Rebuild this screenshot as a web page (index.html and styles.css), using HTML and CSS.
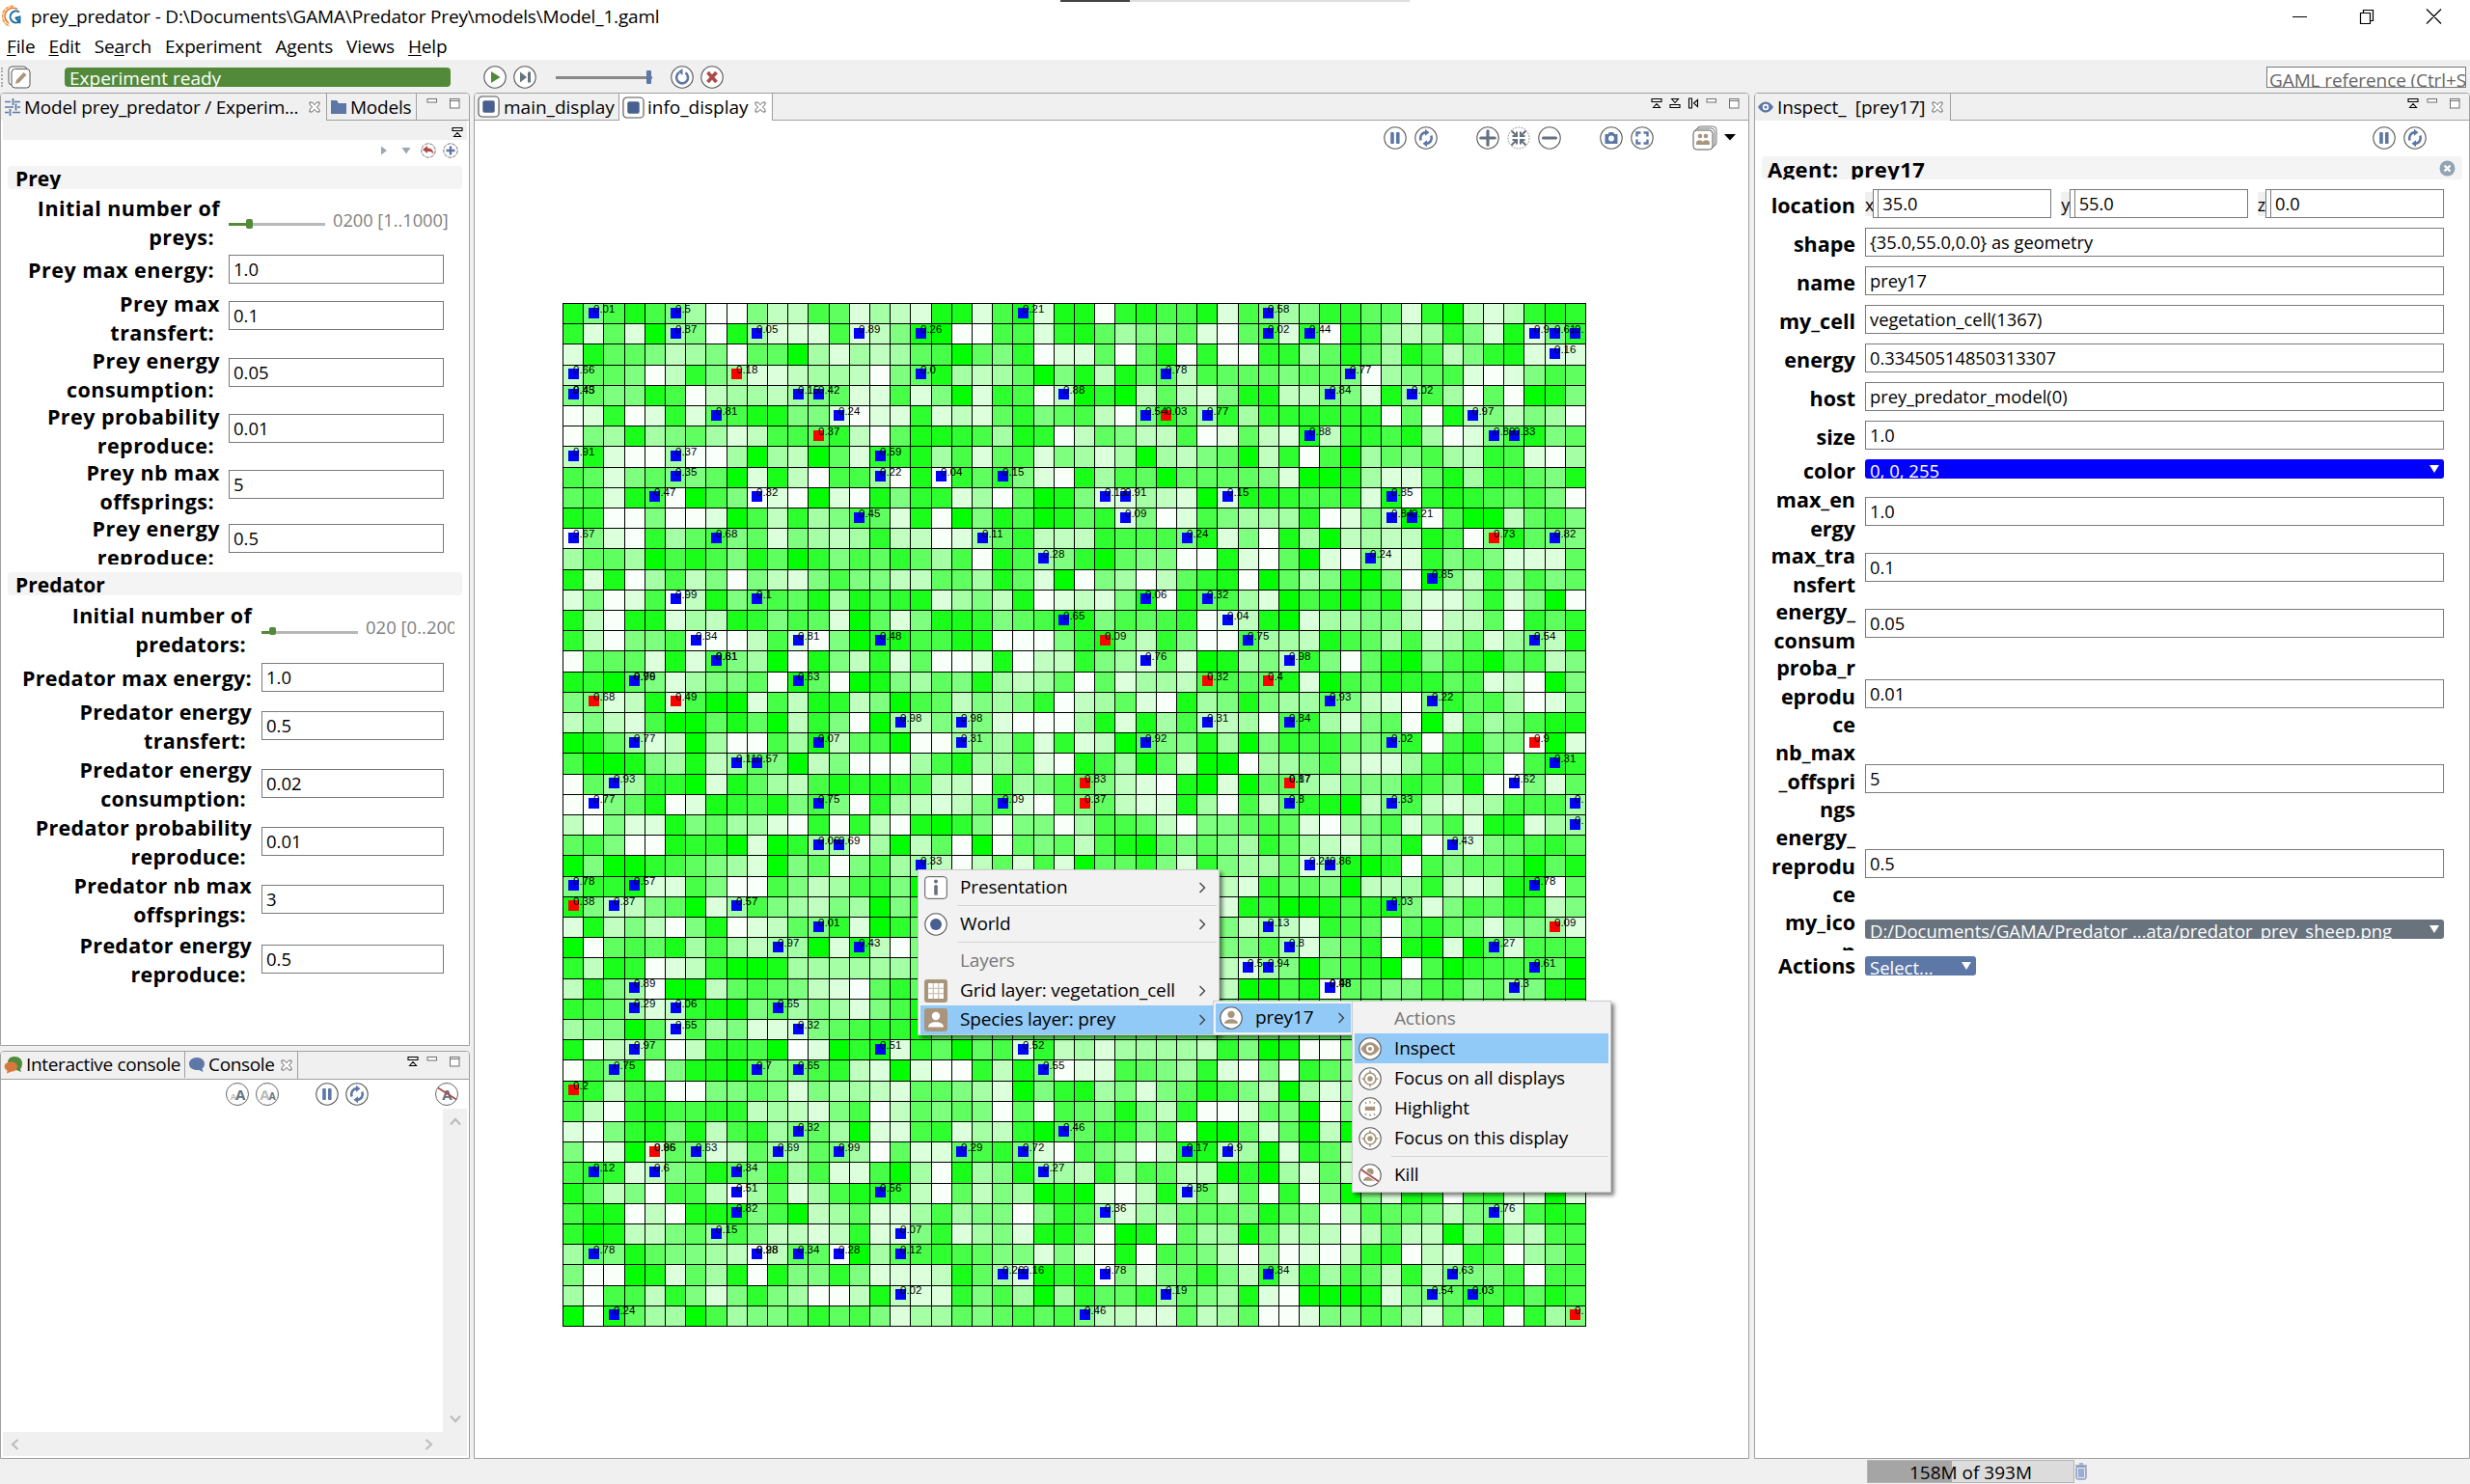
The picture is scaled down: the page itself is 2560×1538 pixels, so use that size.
FILE: index.html
```html
<!DOCTYPE html>
<html lang="en">
<head>
<meta charset="utf-8">
<title>prey_predator</title>
<link rel="stylesheet" href="styles.css">
</head>
<body>
<svg class="defs" width="0" height="0">
  <defs>
    <symbol id="ring" viewBox="0 0 24 24"><circle cx="12" cy="12" r="11.2" fill="#fff" stroke="#555" stroke-width="1.1"/></symbol>
    <symbol id="play" viewBox="0 0 24 24"><use href="#ring"/><path d="M8 6l9.500 6L8 18z" fill="#4f8a38"/></symbol>
    <symbol id="step" viewBox="0 0 24 24"><use href="#ring"/><path d="M7 6.500l7 5.500-7 5.500z" fill="#66727f"/><path d="M15 6.500h3v11h-3z" fill="#66727f"/></symbol>
    <symbol id="reload" viewBox="0 0 24 24"><use href="#ring"/><path d="M15.500 7.400a6 6 0 1 1-6.500-.2" fill="none" stroke="#5d77a6" stroke-width="2.600"/><path d="M12.500 3v7L8 6.300z" fill="#5d77a6"/></symbol>
    <symbol id="stop" viewBox="0 0 24 24"><use href="#ring"/><path d="M7.500 7l9 10M16.500 7l-9 10" stroke="#ad4a4a" stroke-width="3.600"/></symbol>
    <symbol id="pause" viewBox="0 0 24 24"><use href="#ring"/><rect x="7.200" y="6" width="3.600" height="12" rx=".8" fill="#5d77a6"/><rect x="13" y="6" width="3.600" height="12" rx=".8" fill="#5d77a6"/></symbol>
    <symbol id="sync" viewBox="0 0 24 24"><use href="#ring"/><path d="M6.700 14.500A5.800 5.800 0 0 1 11.500 6.300M17.300 9.500A5.800 5.800 0 0 1 12.500 17.700" fill="none" stroke="#5d77a6" stroke-width="2.600"/><path d="M11 2.800v7l4.500-3.500zM13 21.200v-7l-4.500 3.500z" fill="#5d77a6"/></symbol>
    <symbol id="zoomin" viewBox="0 0 24 24"><use href="#ring"/><path d="M12 4.800v14.400M4.800 12h14.400" stroke="#66727f" stroke-width="3.200" stroke-linecap="round"/></symbol>
    <symbol id="zoomout" viewBox="0 0 24 24"><use href="#ring"/><path d="M5.500 12h13" stroke="#66727f" stroke-width="3.200" stroke-linecap="round"/></symbol>
    <symbol id="fit" viewBox="0 0 24 24"><circle cx="12" cy="12" r="11" fill="#fff" stroke="#777" stroke-dasharray="1.500 1.500"/><path d="M4.500 4.500l5 5M19.500 4.500l-5 5M4.500 19.500l5-5M19.500 19.500l-5-5M5.500 10h4.500v-4.500M18.500 10H14V5.500M5.500 14h4.500v4.500M18.500 14H14v4.500" fill="none" stroke="#66727f" stroke-width="2"/></symbol>
    <symbol id="camera" viewBox="0 0 24 24"><use href="#ring"/><path d="M5.500 8h3l1.500-2h4l1.500 2h3v10h-13z" fill="#5d77a6"/><circle cx="12" cy="12.500" r="2.900" fill="#fff"/></symbol>
    <symbol id="full" viewBox="0 0 24 24"><use href="#ring"/><path d="M6.500 10.500v-4h4M13.500 6.500h4v4M17.500 13.500v4h-4M10.500 17.500h-4v-4" fill="none" stroke="#5d77a6" stroke-width="2.400"/></symbol>
    <symbol id="stack" viewBox="0 0 26 26"><rect x="5" y="1" width="20" height="20" rx="3.500" fill="#fff" stroke="#777"/><rect x="3" y="3" width="20" height="20" rx="3.500" fill="#fff" stroke="#777"/><rect x="1" y="5" width="20" height="20" rx="3.500" fill="#fff" stroke="#555"/><circle cx="8" cy="11" r="2.300" fill="#a8957c"/><circle cx="14" cy="11" r="2.300" fill="#a8957c"/><path d="M4 20v-2c0-3.500 6.500-3.500 6.800-.5.3-3 7.200-3 7.200.5v2z" fill="#a8957c"/></symbol>
    <symbol id="eyeblue" viewBox="0 0 16 16"><circle cx="8" cy="8" r="5.500" fill="#5d77a6"/><path d="M0 8c4-7 12-7 16 0-4 7-12 7-16 0z" fill="#5d77a6"/><circle cx="8" cy="8" r="3.200" fill="#fff"/><circle cx="8" cy="8" r="1.600" fill="#5d77a6"/></symbol>
    <symbol id="eye" viewBox="0 0 24 24"><use href="#ring"/><path d="M2.500 12c4.500-9 14.500-9 19 0-4.500 9-14.500 9-19 0z" fill="#a8957c"/><circle cx="12" cy="12" r="4" fill="#fff"/><circle cx="12" cy="12" r="2.100" fill="#a8957c"/></symbol>
    <symbol id="target" viewBox="0 0 24 24"><use href="#ring"/><circle cx="12" cy="12" r="6" fill="none" stroke="#a8957c" stroke-width="1.700"/><circle cx="12" cy="12" r="2.700" fill="#a8957c"/><path d="M12 3.500v3M12 17.500v3M3.500 12h3M17.500 12h3" stroke="#a8957c" stroke-width="1.700"/></symbol>
    <symbol id="glow" viewBox="0 0 24 24"><use href="#ring"/><rect x="6.800" y="9.800" width="10.400" height="4.200" fill="#a8957c"/><path d="M12 4v2.500M12 17.500V20M7 5l1 2M17 5l-1 2M7 19l1-2M17 19l-1-2" stroke="#a8957c" stroke-width="1.300"/></symbol>
    <symbol id="person" viewBox="0 0 24 24"><use href="#ring"/><circle cx="12" cy="8.300" r="3.600" fill="#a8957c"/><path d="M5 17.800c0-6 14-6 14 0z" fill="#a8957c"/></symbol>
    <symbol id="kill" viewBox="0 0 24 24"><use href="#person"/><path d="M3 6.500l18 12" stroke="#fff" stroke-width="3.500"/><path d="M2.500 6l18.500 12.500" stroke="#a84f4f" stroke-width="2"/></symbol>
    <symbol id="info" viewBox="0 0 24 24"><rect x=".7" y=".7" width="22.600" height="22.600" rx="3" fill="#fff" stroke="#555"/><circle cx="12" cy="5.500" r="2" fill="#66727f"/><rect x="10.200" y="9.200" width="3.600" height="10.500" rx="1" fill="#66727f"/></symbol>
    <symbol id="world" viewBox="0 0 24 24"><use href="#ring"/><circle cx="12" cy="12" r="6" fill="#48608f"/></symbol>
    <symbol id="gridl" viewBox="0 0 24 24"><rect width="24" height="24" rx="3" fill="#a8957c"/><rect x="4" y="4" width="16" height="16" fill="#fff"/><path d="M9.300 4v16M14.700 4v16M4 9.300h16M4 14.700h16" stroke="#cfc4b5" stroke-width="1.300"/></symbol>
    <symbol id="species" viewBox="0 0 24 24"><rect width="24" height="24" rx="3" fill="#a8957c"/><circle cx="12" cy="8" r="4.200" fill="#fff"/><path d="M4 19.500c0-7 16-7 16 0z" fill="#fff"/></symbol>
    <symbol id="x" viewBox="0 0 12 12"><path d="M1 1h2.500L6 3.700 8.500 1H11v2.500L8.300 6 11 8.500V11H8.500L6 8.300 3.500 11H1V8.500L3.700 6 1 3.500z" fill="#fff" stroke="#555" stroke-width=".9"/></symbol>
    <symbol id="min" viewBox="0 0 12 12"><rect x="1" y="1.500" width="9.500" height="3.500" fill="#fff" stroke="#707070"/></symbol>
    <symbol id="max" viewBox="0 0 12 12"><rect x="1.500" y="1.500" width="9.500" height="9.500" fill="#fff" stroke="#707070"/><path d="M1 3.500h10" stroke="#707070"/></symbol>
    <symbol id="totop" viewBox="0 0 12 12"><path d="M1 1.500h10v3H1zM2.500 10.500L6 6.500l3.500 4z" fill="none" stroke="#000" stroke-width="1.100"/></symbol>
    <symbol id="tobot" viewBox="0 0 12 12"><path d="M1 7.500h10v3H1zM2.500 1.500L6 5.500l3.500-4z" fill="none" stroke="#000" stroke-width="1.100"/></symbol>
    <symbol id="toleft" viewBox="0 0 12 12"><path d="M1.500 1v10h3V1zM10.500 2.500L6.500 6l4 3.500z" fill="none" stroke="#000" stroke-width="1.100"/></symbol>
    <symbol id="disp" viewBox="0 0 24 24"><rect x="1" y="1" width="22" height="22" rx="4" fill="#fff" stroke="#555" stroke-width="1.200"/><rect x="5.500" y="5.500" width="13" height="13" rx="2" fill="#48608f"/></symbol>
    <symbol id="chev" viewBox="0 0 8 12"><path d="M1.500 1l5 5-5 5" fill="none" stroke="#444" stroke-width="1.400"/></symbol>
    <symbol id="sarrow" viewBox="0 0 12 12"><path d="M1 8.500l5-5.500 5 5.500" fill="none" stroke="#bdbdbd" stroke-width="2.200"/></symbol>
  </defs>
</svg>

<div class="window">
  <header class="titlebar">
    <svg class="logo" viewBox="0 0 24 24"><path d="M12 1.500A10.500 10.500 0 0 0 8 22" fill="none" stroke="#f0a13c" stroke-width="1.800" stroke-dasharray="4 1"/><path d="M16 4.500A8.500 8.500 0 0 0 7 19" fill="none" stroke="#e8743b" stroke-width="1.600"/><path d="M18 7.500A6 6 0 1 0 18.500 17v-4.500l-4 1M14 13l5 6" fill="none" stroke="#1c6f9c" stroke-width="2"/></svg>
    <span class="title">prey_predator - D:\Documents\GAMA\Predator Prey\models\Model_1.gaml</span>
    <svg class="winbtns" viewBox="0 0 160 20"><path d="M0 10.500h15M70.500 6.500h10v11h-10zM73.500 6V3.500h10v11H81M139 2.500l15 15M154 2.500l-15 15" fill="none" stroke="#000" stroke-width="1.200"/></svg>
    <div class="notch"></div>
  </header>
  <nav class="menubar">
    <span><u>F</u>ile</span><span><u>E</u>dit</span><span>Se<u>a</u>rch</span><span>Experiment</span><span>Agents</span><span>Views</span><span><u>H</u>elp</span>
  </nav>
  <div class="toolbar">
    <div class="grip"></div>
    <svg class="edit" viewBox="0 0 24 24"><rect x="1" y="1" width="19" height="19" rx="3.500" fill="#fff" stroke="#555"/><rect x="4" y="3.500" width="19" height="19.500" rx="3.500" fill="#fff" stroke="#555"/><path d="M8 19l1-4 7.500-8 3 2.500L12 17.500z" fill="#a8957c"/></svg>
    <div class="ready">Experiment ready</div>
    <svg class="ic"><use href="#play"/></svg>
    <svg class="ic step"><use href="#step"/></svg>
    <div class="speed"><i></i></div>
    <svg class="ic"><use href="#reload"/></svg>
    <svg class="ic stop"><use href="#stop"/></svg>
    <div class="search">GAML reference (Ctrl+S</div>
  </div>

  <main class="work">
    <div class="left">
      <section class="pane params">
        <div class="tabs">
          <div class="tab on t1"><svg width="18" height="18" viewBox="0 0 18 18"><path d="M1 3.500h6M11 3.500h6M1 9h9M14 9h3M1 14.500h4M9 14.500h8M9.500 0v7M12.500 5.500v7M6.500 11v7" stroke="#5d77a6" stroke-width="1.700"/></svg><b>Model prey_predator / Experim...</b><svg class="cx"><use href="#x"/></svg></div>
          <div class="tab t2"><svg width="18" height="18" viewBox="0 0 18 18"><path d="M1 2h6l2 3h8v11H1z" fill="#5d77a6"/></svg><b>Models</b></div>
          <div class="ctl"><svg><use href="#min"/></svg><svg><use href="#max"/></svg></div>
        </div>
        <div class="subbar"><svg class="s12"><use href="#totop"/></svg></div>
        <div class="minibar">
          <svg width="8" height="12"><path d="M1 1.500l6 4.500-6 4.500z" fill="#9aa9b5"/></svg>
          <svg width="10" height="10"><path d="M.5 2h9L5 8.500z" fill="#9aa9b5"/></svg>
          <svg width="16" height="16" viewBox="0 0 16 16"><circle cx="8" cy="8" r="7.200" fill="#fff" stroke="#777" stroke-dasharray="4 1"/><path d="M2 7l5-4v2.500c4 0 6 2 6.500 6.500-1.500-2.500-3-3-6.500-3V11z" fill="#ad4a4a"/></svg>
          <svg width="16" height="16" viewBox="0 0 16 16"><circle cx="8" cy="8" r="7.200" fill="#fff" stroke="#777" stroke-dasharray="4 1"/><path d="M8 3.500v9M3.500 8h9" stroke="#5d77a6" stroke-width="2.400"/></svg>
        </div>
        <h2 class="head">Prey</h2>
        <div class="form prey">
          <div class="row r59"><label>Initial number of<br><em>preys:</em></label><div class="slide"><i></i></div><span class="rng">0200 [1..1000]</span></div>
          <div class="row r39"><label><em>Prey max energy:</em></label><div class="in">1.0</div></div>
          <div class="row r59"><label>Prey max<br><em>transfert:</em></label><div class="in">0.1</div></div>
          <div class="row r58"><label>Prey energy<br><em>consumption:</em></label><div class="in">0.05</div></div>
          <div class="row r58"><label>Prey probability<br><em>reproduce:</em></label><div class="in">0.01</div></div>
          <div class="row r58"><label>Prey nb max<br><em>offsprings:</em></label><div class="in">5</div></div>
          <div class="row r52"><label>Prey energy<br><em>reproduce:</em></label><div class="in">0.5</div></div>
        </div>
        <h2 class="head second">Predator</h2>
        <div class="form pred">
          <div class="row r61"><label>Initial number of<br><em>predators:</em></label><div class="slide"><i></i></div><span class="rng">020 [0..200]</span></div>
          <div class="row r39"><label>Predator max energy:</label><div class="in">1.0</div></div>
          <div class="row r60"><label>Predator energy<br><em>transfert:</em></label><div class="in">0.5</div></div>
          <div class="row r60"><label>Predator energy<br><em>consumption:</em></label><div class="in">0.02</div></div>
          <div class="row r60"><label>Predator probability<br><em>reproduce:</em></label><div class="in">0.01</div></div>
          <div class="row r62"><label>Predator nb max<br><em>offsprings:</em></label><div class="in">3</div></div>
          <div class="row r60"><label>Predator energy<br><em>reproduce:</em></label><div class="in">0.5</div></div>
        </div>
      </section>
      <section class="pane console">
        <div class="tabs">
          <div class="tab c1"><svg width="20" height="18" viewBox="0 0 20 18"><path d="M11 0c5 0 8 3 8 7 0 3-1 5-2 6l1 3-5-2c-5 0-9-3-9-7s2-7 7-7z" fill="#4f8a38"/><path d="M7.500 5.500c4 0 6.500 2 6.500 5s-3 5-6 5L3 17.500l.5-3C-1.500 12 0 5.500 7.500 5.500z" fill="#d9783d"/></svg><b>Interactive console</b></div>
          <div class="tab on c2"><svg width="18" height="18" viewBox="0 0 18 18"><path d="M9 1c5 0 8 3 8 6.500 0 2-1 4-2.500 5l1 3.500-4-2C5 14.500 1 12 1 7.500 1 4 4 1 9 1z" fill="#5d77a6"/></svg><b>Console</b><svg class="cx"><use href="#x"/></svg></div>
          <div class="ctl"><svg><use href="#totop"/></svg><svg><use href="#min"/></svg><svg><use href="#max"/></svg></div>
        </div>
        <div class="cbar">
          <div class="aa"><s>A</s>A</div><div class="aa rev"><s>A</s>A</div>
          <svg class="ic p"><use href="#pause"/></svg><svg class="ic q"><use href="#sync"/></svg>
          <div class="aa clr">A<svg viewBox="0 0 24 24"><path d="M3 5.500l19 12" stroke="#ad4a4a" stroke-width="1.800"/></svg></div>
        </div>
        <div class="cbody">
          <div class="cview"></div>
          <div class="vs"><svg><use href="#sarrow"/></svg><svg class="dn"><use href="#sarrow"/></svg></div>
          <div class="hs"><svg class="lf"><use href="#sarrow"/></svg><svg class="rt"><use href="#sarrow"/></svg></div>
        </div>
      </section>
    </div>

    <section class="pane display">
      <div class="tabs">
        <div class="tab d1"><svg width="23" height="23"><use href="#disp"/></svg><b>main_display</b></div>
        <div class="tab on d2"><svg width="23" height="23"><use href="#disp"/></svg><b>info_display</b><svg class="cx"><use href="#x"/></svg></div>
        <div class="ctl"><svg><use href="#totop"/></svg><svg><use href="#tobot"/></svg><svg><use href="#toleft"/></svg><svg><use href="#min"/></svg><svg><use href="#max"/></svg></div>
      </div>
      <div class="dbar">
        <svg class="ic"><use href="#pause"/></svg><svg class="ic g8"><use href="#sync"/></svg>
        <svg class="ic g40"><use href="#zoomin"/></svg><svg class="ic g8"><use href="#fit"/></svg><svg class="ic g8"><use href="#zoomout"/></svg>
        <svg class="ic g40"><use href="#camera"/></svg><svg class="ic g8"><use href="#full"/></svg>
        <svg class="ic stk"><use href="#stack"/></svg><svg class="drop" width="12" height="7"><path d="M0 0h12L6 6.500z"/></svg>
      </div>
      <svg class="world" id="world-map" width="1062" height="1062" viewBox="0 0 1062 1062"></svg>
    </section>

    <section class="pane inspect">
      <div class="tabs">
        <div class="tab on i1"><svg width="16" height="16"><use href="#eyeblue"/></svg><b>Inspect_&nbsp; [prey17]</b><svg class="cx"><use href="#x"/></svg></div>
        <div class="ctl"><svg><use href="#totop"/></svg><svg><use href="#min"/></svg><svg><use href="#max"/></svg></div>
      </div>
      <div class="ibar"><svg class="ic"><use href="#pause"/></svg><svg class="ic g8"><use href="#sync"/></svg></div>
      <h2 class="head">Agent:&nbsp; prey17<svg width="17" height="17" viewBox="0 0 17 17"><circle cx="8.500" cy="8.500" r="8" fill="#93a3b3"/><path d="M5.500 5.500l6 6M11.500 5.500l-6 6" stroke="#fff" stroke-width="2.400"/></svg></h2>
      <div class="form ag">
        <div class="row r40"><label>location</label><div class="xyz"><span>x</span><div class="in">35.0</div><span class="y">y</span><div class="in">55.0</div><span>z,</span><div class="in">0.0</div></div></div>
        <div class="row r40"><label>shape</label><div class="in">{35.0,55.0,0.0} as geometry</div></div>
        <div class="row r40"><label>name</label><div class="in">prey17</div></div>
        <div class="row r40"><label>my_cell</label><div class="in">vegetation_cell(1367)</div></div>
        <div class="row r40"><label>energy</label><div class="in">0.33450514850313307</div></div>
        <div class="row r40"><label>host</label><div class="in">prey_predator_model(0)</div></div>
        <div class="row r40"><label>size</label><div class="in">1.0</div></div>
        <div class="row r36"><label>color</label><div class="sel blue">0, 0, 255<i></i></div></div>
        <div class="row r58"><label>max_en<br>ergy</label><div class="in">1.0</div></div>
        <div class="row r58"><label>max_tra<br>nsfert</label><div class="in">0.1</div></div>
        <div class="row r58"><label>energy_<br>consum</label><div class="in">0.05</div></div>
        <div class="row r88"><label>proba_r<br>eprodu<br>ce</label><div class="in">0.01</div></div>
        <div class="row r88"><label>nb_max<br>_offspri<br>ngs</label><div class="in">5</div></div>
        <div class="row r88"><label>energy_<br>reprodu<br>ce</label><div class="in">0.5</div></div>
        <div class="row r44"><label>my_ico<br>n</label><div class="sel slate">D:/Documents/GAMA/Predator ...ata/predator_prey_sheep.png<i></i></div></div>
        <div class="row r31"><label>Actions</label><div class="sel steel">Select...<i></i></div></div>
      </div>
    </section>
  </main>

  <footer class="status">
    <div class="heap">158M of 393M</div>
    <svg width="14" height="18" viewBox="0 0 14 18"><rect x="2" y="4" width="10" height="13" rx="1.500" fill="#dce6f4" stroke="#5d77a6"/><path d="M1 3h12M5 1h4M5 6v9M7 6v9M9 6v9" stroke="#5d77a6"/></svg>
  </footer>

  <div class="menu m1">
    <div class="item a"><svg><use href="#info"/></svg><span>Presentation</span><svg class="ch"><use href="#chev"/></svg></div>
    <hr>
    <div class="item b"><svg><use href="#world"/></svg><span>World</span><svg class="ch"><use href="#chev"/></svg></div>
    <hr>
    <div class="item c dim"><span>Layers</span></div>
    <div class="item d"><svg><use href="#gridl"/></svg><span>Grid layer: vegetation_cell</span><svg class="ch"><use href="#chev"/></svg></div>
    <div class="item hot"><svg><use href="#species"/></svg><span>Species layer: prey</span><svg class="ch"><use href="#chev"/></svg></div>
  </div>
  <div class="menu m2">
    <div class="item hot"><svg><use href="#person"/></svg><span>prey17</span><svg class="ch"><use href="#chev"/></svg></div>
  </div>
  <div class="menu m3">
    <div class="item dim"><span>Actions</span></div>
    <div class="item hot"><svg><use href="#eye"/></svg><span>Inspect</span></div>
    <div class="item"><svg><use href="#target"/></svg><span>Focus on all displays</span></div>
    <div class="item"><svg><use href="#glow"/></svg><span>Highlight</span></div>
    <div class="item"><svg><use href="#target"/></svg><span>Focus on this display</span></div>
    <hr>
    <div class="item"><svg><use href="#kill"/></svg><span>Kill</span></div>
  </div>
</div>
<script src="world.js"></script>
</body>
</html>
```
FILE: styles.css
```css
* { box-sizing: border-box; }
body { margin: 0; background: #f0f0f0; font: 19px/24px "Open Sans", "Noto Sans", sans-serif; color: #000; }
.defs { position: absolute; }
svg { display: block; flex: none; }
.window { width: 2560px; height: 1538px; position: relative; display: flex; flex-direction: column; overflow: hidden; background: #f0f0f0; }
.titlebar { height: 34px; background: #fff; display: flex; align-items: center; padding-left: 2px; flex: none; position: relative; }
.logo { width: 24px; height: 24px; margin-right: 6px; }
.title { white-space: nowrap; flex: 1; letter-spacing: -.17px; }
.winbtns { width: 160px; height: 20px; margin-right: 24px; }
.notch { position: absolute; left: 1099px; top: 0; width: 362px; height: 2px; background: linear-gradient(90deg, #444 72px, #ddd 72px); }
.menubar { height: 28px; background: #fff; display: flex; gap: 14px; padding-left: 7px; flex: none; line-height: 28px; letter-spacing: -.15px; }
.menubar u { text-underline-offset: 2px; }
.toolbar { height: 34px; display: flex; align-items: center; flex: none; padding-left: 1px; padding-top: 2px; }
.grip { width: 2px; height: 20px; border-left: 2px dotted #aaa; margin-right: 5px; }
.edit { width: 24px; height: 24px; margin-right: 35px; }
.ready { width: 400px; height: 20px; background: #528a3a; color: #fff; border-radius: 4px; padding-left: 5px; line-height: 22px; overflow: hidden; margin-right: 34px; }
.ic { width: 24px; height: 24px; }
.step { margin-left: 7px; }
.speed { width: 100px; height: 14px; margin: 0 19px 0 20px; background: linear-gradient(#888, #888) 0 6px / 100% 3px no-repeat; }
.speed i { display: block; width: 5px; height: 14px; background: #5d77a6; margin-left: 94px; border-radius: 1px; }
.stop { margin-left: 7px; }
.search { margin-left: auto; width: 207px; height: 22px; margin-right: 4px; border: 1px solid #7a7a7a; background: #fff; color: #666; padding-left: 2px; line-height: 26px; overflow: hidden; white-space: nowrap; letter-spacing: -.1px; }

.work { display: flex; height: 1416px; gap: 4px; flex: none; }
.left { width: 487px; display: flex; flex-direction: column; gap: 5px; }
.pane { border: 1px solid #a0a0a0; border-radius: 4px 4px 0 0; background: #fff; display: flex; flex-direction: column; overflow: hidden; }
.params { height: 988px; }
.console { height: 423px; }
.display { width: 1322px; }
.inspect { width: 742px; margin-left: 1px; }
.tabs { height: 28px; background: #f0f0f0; display: flex; flex: none; box-shadow: inset 0 -1px #a0a0a0; }
.tab { display: flex; align-items: center; border-right: 1px solid #a0a0a0; white-space: nowrap; padding-left: 3px; height: 27px; gap: 4px; }
.tab b { font-weight: 400; }
.tab.on { background: #f0f0f0; height: 28px; }
.display .tab.on { background: #fff; }
.cx { width: 12px; height: 12px; margin-left: 8px; }
.left .tab { letter-spacing: -.22px; padding-left: 3px; gap: 3px; }
.console .tab { letter-spacing: -.34px; }
.left .console .tab { letter-spacing: -.34px; }
.console .tab b { line-height: 22px; padding-bottom: 2px; }
.console .cx { margin-left: 3px; }
.t1 { width: 338px; } .t2 { width: 93px; }
.c1 { width: 191px; } .c2 { width: 117px; }
.d1 { width: 150px; } .d2 { width: 159px; }
.d2 { gap: 3px; }
.d2 .cx { margin-left: 3px; }
.i1 { width: 203px; }
.i1 .cx { margin-left: 3px; }
.i1 b { letter-spacing: -.15px; }
.ctl { margin-left: auto; display: flex; padding: 4px 9px 0 0; }
.ctl svg, .s12 { width: 12px; height: 12px; }
.params .ctl, .inspect .ctl, .console .ctl { gap: 11px; }
.inspect .ctl svg:nth-child(1), .console .ctl svg:nth-child(1) { margin-right: -3px; }
.display .ctl { gap: 7px; }
.display .ctl svg:nth-child(4) { margin-right: 4px; }
.subbar { height: 20px; margin: 0 2px; background: #f0f0f0; display: flex; justify-content: flex-end; padding: 6px 4px 0 0; flex: none; }
.minibar { height: 22px; display: flex; align-items: center; justify-content: flex-end; gap: 7px; padding-right: 11px; flex: none; }
.minibar svg:nth-child(1) { margin-right: 7px; }
.minibar svg:nth-child(2) { margin-right: 3px; }
.head { margin: 5px 7px 0 7px; height: 24px; background: #f4f4f4; border-radius: 4px; font-size: 21px; line-height: 27px; padding-left: 8px; flex: none; overflow: hidden; display: flex; }
.inspect .head { font-size: 22px; letter-spacing: .45px; padding-left: 6px; }
.second { margin-top: 8px; }
.row { display: flex; align-items: flex-start; overflow: hidden; }
.row label { font-weight: 700; text-align: right; line-height: 29.600px; flex: none; font-size: 21.500px; white-space: nowrap; }
.row em { font-style: normal; padding-right: 6px; }
.in { height: 30px; border: 1px solid #7a7a7a; background: #fff; padding-left: 4px; line-height: 27px; margin-top: 12px; white-space: nowrap; overflow: hidden; font-size: 18.500px; }
.r58 { height: 58px; } .r59 { height: 59px; } .r39 { height: 39px; } .r52 { height: 52px; } .r60 { height: 60px; } .r61 { height: 61px; } .r62 { height: 62px; }
.r39 label { padding-top: 4px; }
.r39 .in { margin-top: 3px; }
.r52 .in { margin-top: 10px; }
.prey { padding-top: 5px; height: 389px; }
.prey .r59:first-child { height: 60px; }
.prey label { width: 227px; margin-right: 9px; letter-spacing: .45px; }
.prey .in { width: 223px; }
.pred { padding-top: 6px; }
.pred label { width: 260px; margin-right: 10px; line-height: 30px; letter-spacing: .28px; }
.pred .in { width: 189px; }
.pred .r60 .in, .pred .r62 .in { margin-top: 14px; }
.slide { width: 100px; height: 10px; margin: 26px 8px 0 0; background: linear-gradient(90deg, #528a3a 20px, #b8b8b8 20px) 0 4px / 100% 3px no-repeat; flex: none; }
.slide i { display: block; width: 7px; height: 10px; border-radius: 2px; background: #528a3a; margin-left: 18px; }
.pred .slide { background: linear-gradient(90deg, #528a3a 8px, #b8b8b8 8px) 0 4px / 100% 3px no-repeat; margin-top: 27px; }
.pred .slide i { margin-left: 8px; height: 8px; }
.rng { color: #808080; font-size: 18.200px; margin-top: 15px; white-space: nowrap; width: 128px; overflow: hidden; }
.pred .rng { width: 92px; margin-top: 15px; font-size: 18.500px; }

.cbar { height: 30px; display: flex; align-items: center; padding: 0 0 1px 233px; flex: none; }
.console .tabs { height: 29px; }
.aa { width: 24px; height: 24px; border: 1px solid #666; border-radius: 50%; font: 700 15px/22px "Open Sans", sans-serif; color: #66727f; text-align: center; position: relative; letter-spacing: -1px; }
.aa s { text-decoration: none; font-size: 9px; color: #bbb; }
.rev { margin-left: 7px; font-size: 10px; }
.rev s { font-size: 15px; }
.p { margin-left: 38px; } .q { margin-left: 7px; }
.clr { margin-left: 69px; }
.clr svg { position: absolute; inset: -1px; }
.cbody { display: grid; grid-template-columns: 1fr 25px; grid-template-rows: 335px 25px; margin: 0 2px; }
.vs { background: #f0f0f0; display: flex; flex-direction: column; justify-content: space-between; align-items: center; padding: 8px 0; }
.hs { background: #f0f0f0; grid-column: 1 / 3; display: flex; justify-content: space-between; align-items: center; padding: 0 34px 0 7px; }
.cbody svg { width: 12px; height: 12px; }
.dn { transform: rotate(180deg); } .lf { transform: rotate(-90deg); } .rt { transform: rotate(90deg); }

.dbar { display: flex; align-items: center; height: 35px; padding-left: 942px; flex: none; }
.g8 { margin-left: 8px; } .g40 { margin-left: 40px; }
.stk { width: 26px; height: 26px; margin-left: 40px; }
.drop { margin-left: 7px; }
.world { margin: 154px 0 0 91px; }
.agent-label { font: 11.500px "Liberation Sans", Arial, sans-serif; fill: #000; }

.ibar { height: 32px; display: flex; padding: 6px 44px 0 0; justify-content: flex-end; flex: none; }
.inspect .head svg { margin: 4px 7px 0 auto; }
.ag { padding-top: 1px; }
.ag label { width: 104px; margin-right: 10px; }
.ag .in { width: 600px; margin-top: 9px; font-size: 18.300px; }
.ag .r58 .in { margin-top: 12px; }
.ag .r88 .in { margin-top: 27px; }
.r40 { height: 40px; } .r40 label { padding-top: 11px; }
.r36 { height: 36px; } .r36 label { padding-top: 6px; }
.r88 { height: 88px; } .r44 { height: 44px; } .r31 { height: 31px; } .r31 label { padding-top: 1px; }
.xyz { display: flex; width: 600px; }
.xyz span { width: 20px; background: #f0f0f0; height: 25px; margin: 12px -11px 0 0; font-size: 18px; line-height: 26px; }
.ag .xyz .in { width: 185px; flex: none; padding-left: 9px; box-shadow: inset 4px 0 #fff, inset 5px 0 #7a7a7a; }
.xyz .in + span { margin-left: 10px; }
.sel { color: #fff; height: 20px; border-radius: 3px; line-height: 23px; padding-left: 5px; width: 600px; font-size: 18.500px; display: flex; white-space: nowrap; overflow: hidden; margin-top: 10px; }
.sel i { margin: 6px 5px 0 auto; border: 5px solid transparent; border-top: 8px solid #fff; height: 0; }
.blue { background: #00f; margin-top: 9px; } .slate { background: #68737e; margin-top: 12px; } .steel { background: #5d77a6; width: 115px; margin-top: 6px; }

.status { display: flex; flex: 1; padding-left: 1935px; align-items: center; }
.heap { width: 215px; height: 24px; text-align: center; background: linear-gradient(90deg, #a5a5a5 87px, #dcdcdc 87px); border: 1px solid #b5b5b5; line-height: 25px; }

.menu { position: absolute; background: #f2f2f2; border: 1px solid #ccc; box-shadow: 3px 3px 4px rgba(0,0,0,.5); padding: 2px; }
.menu hr { border: 0; height: 1px; background: #d4d4d4; margin: 3px 0 3px 38px; }
.item { display: flex; align-items: center; height: 31px; white-space: nowrap; padding-left: 41px; }
.item span { padding-bottom: 2px; letter-spacing: -.15px; }
.item svg { width: 24px; height: 24px; margin: 0 13px 0 -37px; }
.item .ch { width: 8px; height: 12px; margin: 0 11px 0 auto; }
.hot { background: #91c9f7; }
.dim { color: #777; }
.m1 { left: 951px; top: 901px; width: 313px; height: 172px; }
.m1 .hot, .m2 .hot { height: 30px; }
.m2 { left: 1257px; top: 1037px; width: 146px; height: 36px; }
.m2 .ch { margin-right: 6px; }
.m3 { left: 1401px; top: 1037px; width: 269px; height: 199px; }
```
FILE: world.js
```js
// Grass level of every vegetation cell: 0 is full green, 9 is bare.
const LEVELS = [
  "15313569957734867811831811921331835652244820787212",
  "28480659168883875109933821465548943829136762581852",
  "81445765944068676430452988494192992264146137521888",
  "74459725688766795416764051714473444544596543898534",
  "54551397667654883850823970207478511775581636949015",
  "98298284311558988287842543795146262222229491757569",
  "95616546873342794112361297457739847817223169853154",
  "71899699606704822163843856860675407293064536723896",
  "34854554081793369192425891634044445800168841622451",
  "43813903598908915228694015886780811233281921234359",
  "12995998037265348190513014285983566629857093007435",
  "95892643548567627798642777233351859160767713951455",
  "64460313514025342463913652045599189408958825458884",
  "18196375957853557744614809569742190465105905726354",
  "85983971543416132186571987851914368031031788628509",
  "17911867125348048511254311534329871086655797749242",
  "27955399973895021331199952157259936671346376486571",
  "94448183560915728499819772568480165725941053204375",
  "12045865549149015645167649486673344180341224387905",
  "55871830083712750347565297648916515664578952436985",
  "75783004140725906756589996181637769326854908465311",
  "01468706993617430996563828704551605232454293155908",
  "30015617645075999631664891360480096653788632349312",
  "94662208146731212377926534578910804467555235199584",
  "99541981231535926787538945478816937421075378763336",
  "79588154668929279102595596334795543489653853811866",
  "43599122080266960749094547310454562467855196854324",
  "05002345680549536679748380442582566486102935443041",
  "52218835993576325044444444444444782445077627871194",
  "15775408635675605344444444444444812001321585342375",
  "81757951987452802444444444444444576782349424585568",
  "09434163676608179544444444444444553685429108048333",
  "27129872001666666544444444444444786504320930233340",
  "71569007434578942444444444444444700319445533546510",
  "23468721054656853144444444444444444444444444444444",
  "65504836588854322044444444444444444444444444444444",
  "19774972230980218240438276866667250199544444444444",
  "93519511045532780899271598834562895924544444444444",
  "22733995545856678445680521658541357068644444444444",
  "37921332276785397454594934515729984509544444444444",
  "89521517326546088328672044225390048407044444444444",
  "59808458746645694884325893569711760824744444444444",
  "32287541452638830691651667263477020684744444444444",
  "14759337963863122794756010897174749295058129328808",
  "31197911153076488636559523686644451459634457558312",
  "20177546357787288528658114901946604767974770616733",
  "64514556797449064323455858919345796989722978239653",
  "59901846191552588871468021958542572726347275553933",
  "69337258525699717882536062442645618900018554232413",
  "09146603655424358664543435778847649985534684629265"
];

// "row: column energy", several energies are joined by "+", predators end with "r".
const AGENTS = `0: 1 0.01,5 0.5,22 0.21,34 0.58
1: 5 0.87,9 0.05,14 0.89,17 0.26,34 0.02,36 0.44,47 0.9,48 0.61,49 0.
2: 48 0.16
3: 0 0.66,8 0.18r,17 0.0,29 0.78,38 0.77
4: 0 0.45+0.43,11 0.15,12 0.42,24 0.88,37 0.84,41 0.02
5: 7 0.81,13 0.24,28 0.54,29 0.03r,31 0.77,44 0.97
6: 12 0.37r,36 0.88,45 0.89,46 0.33
7: 0 0.91,5 0.37,15 0.59
8: 5 0.35,15 0.22,18 0.04,21 0.15
9: 4 0.47,9 0.32,26 0.13,27 0.91,32 0.15,40 0.85
10: 14 0.45,27 0.09,40 0.84,41 0.21
11: 0 0.67,7 0.68,20 0.11,30 0.24,45 0.73r,48 0.82
12: 23 0.28,39 0.24
13: 42 0.85
14: 5 0.99,9 0.1,28 0.06,31 0.32
15: 24 0.65,32 0.04
16: 6 0.34,11 0.81,15 0.48,26 0.09r,33 0.75,47 0.54
17: 7 0.31+0.61,28 0.76,35 0.98
18: 3 0.96+0.79,11 0.63,31 0.32r,34 0.4r
19: 1 0.68r,5 0.49r,37 0.93,42 0.22
20: 16 0.98,19 0.98,31 0.31,35 0.84
21: 3 0.77,12 0.07,19 0.31,28 0.92,40 0.02,47 0.9r
22: 8 0.11,9 0.57,48 0.31
23: 2 0.93,25 0.83r,35 0.87+0.17r,46 0.62
24: 1 0.77,12 0.75,21 0.09,25 0.37r,35 0.8,40 0.33,49 0.
25: 49 0.
26: 12 0.06,13 0.69,43 0.43
27: 17 0.33,36 0.21,37 0.86
28: 0 0.78,3 0.57,47 0.78
29: 0 0.38r,2 0.37,8 0.57,40 0.03
30: 12 0.01,34 0.13,48 0.09r
31: 10 0.97,14 0.43,35 0.8,45 0.27
32: 33 0.5,34 0.94,47 0.61
33: 3 0.89,37 0.48+0.98,46 0.3
34: 3 0.29,5 0.06,10 0.65
35: 5 0.65,11 0.32
36: 3 0.97,15 0.51,22 0.52
37: 2 0.75,9 0.7,11 0.65,23 0.55
38: 0 0.2r
40: 11 0.32,24 0.46
41: 4 0.95+0.86r,6 0.63,10 0.69,13 0.99,19 0.29,22 0.72,30 0.17,32 0.9
42: 1 0.12,4 0.6,8 0.34,23 0.27
43: 8 0.51,15 0.56,30 0.85
44: 8 0.82,26 0.36,45 0.76
45: 7 0.15,16 0.07
46: 1 0.78,9 0.98+0.28,11 0.34,13 0.28,16 0.12
47: 21 0.26,22 0.16,26 0.78,34 0.34,43 0.63
48: 16 0.02,29 0.19,42 0.54,44 0.03
49: 2 0.24,25 0.46,49 0.r`;

const SHADES = [2, 26, 46, 70, 95, 127, 165, 192, 220, 249];
const PITCH = 21.2;
const at = i => Math.round(i * PITCH);
let out = "";

LEVELS.forEach((line, row) => {
  for (let col = 0; col < 50; col++) {
    const v = SHADES[+line[col]];
    out += `<rect x="${at(col) + 0.5}" y="${at(row) + 0.5}" width="${at(col + 1) - at(col)}" height="${at(row + 1) - at(row)}" fill="rgb(${v},255,${v})" stroke="#000"/>`;
  }
});

let labels = "";
AGENTS.split("\n").forEach(line => {
  const [row, list] = line.split(": ");
  list.split(",").forEach(entry => {
    const [col, text] = entry.split(" ");
    const cx = (+col + 0.5) * PITCH, cy = (+row + 0.5) * PITCH;
    out += `<rect x="${Math.round(cx - 5)}" y="${Math.round(cy - 6)}" width="11" height="11" fill="${text.endsWith("r") ? "#f00" : "#00f"}"/>`;
    text.replace("r", "").split("+").forEach(t => {
      labels += `<text class="agent-label" x="${Math.round(cx)}" y="${Math.round(cy - 1)}">${t}</text>`;
    });
  });
});
document.getElementById("world-map").innerHTML = out + labels;
```
